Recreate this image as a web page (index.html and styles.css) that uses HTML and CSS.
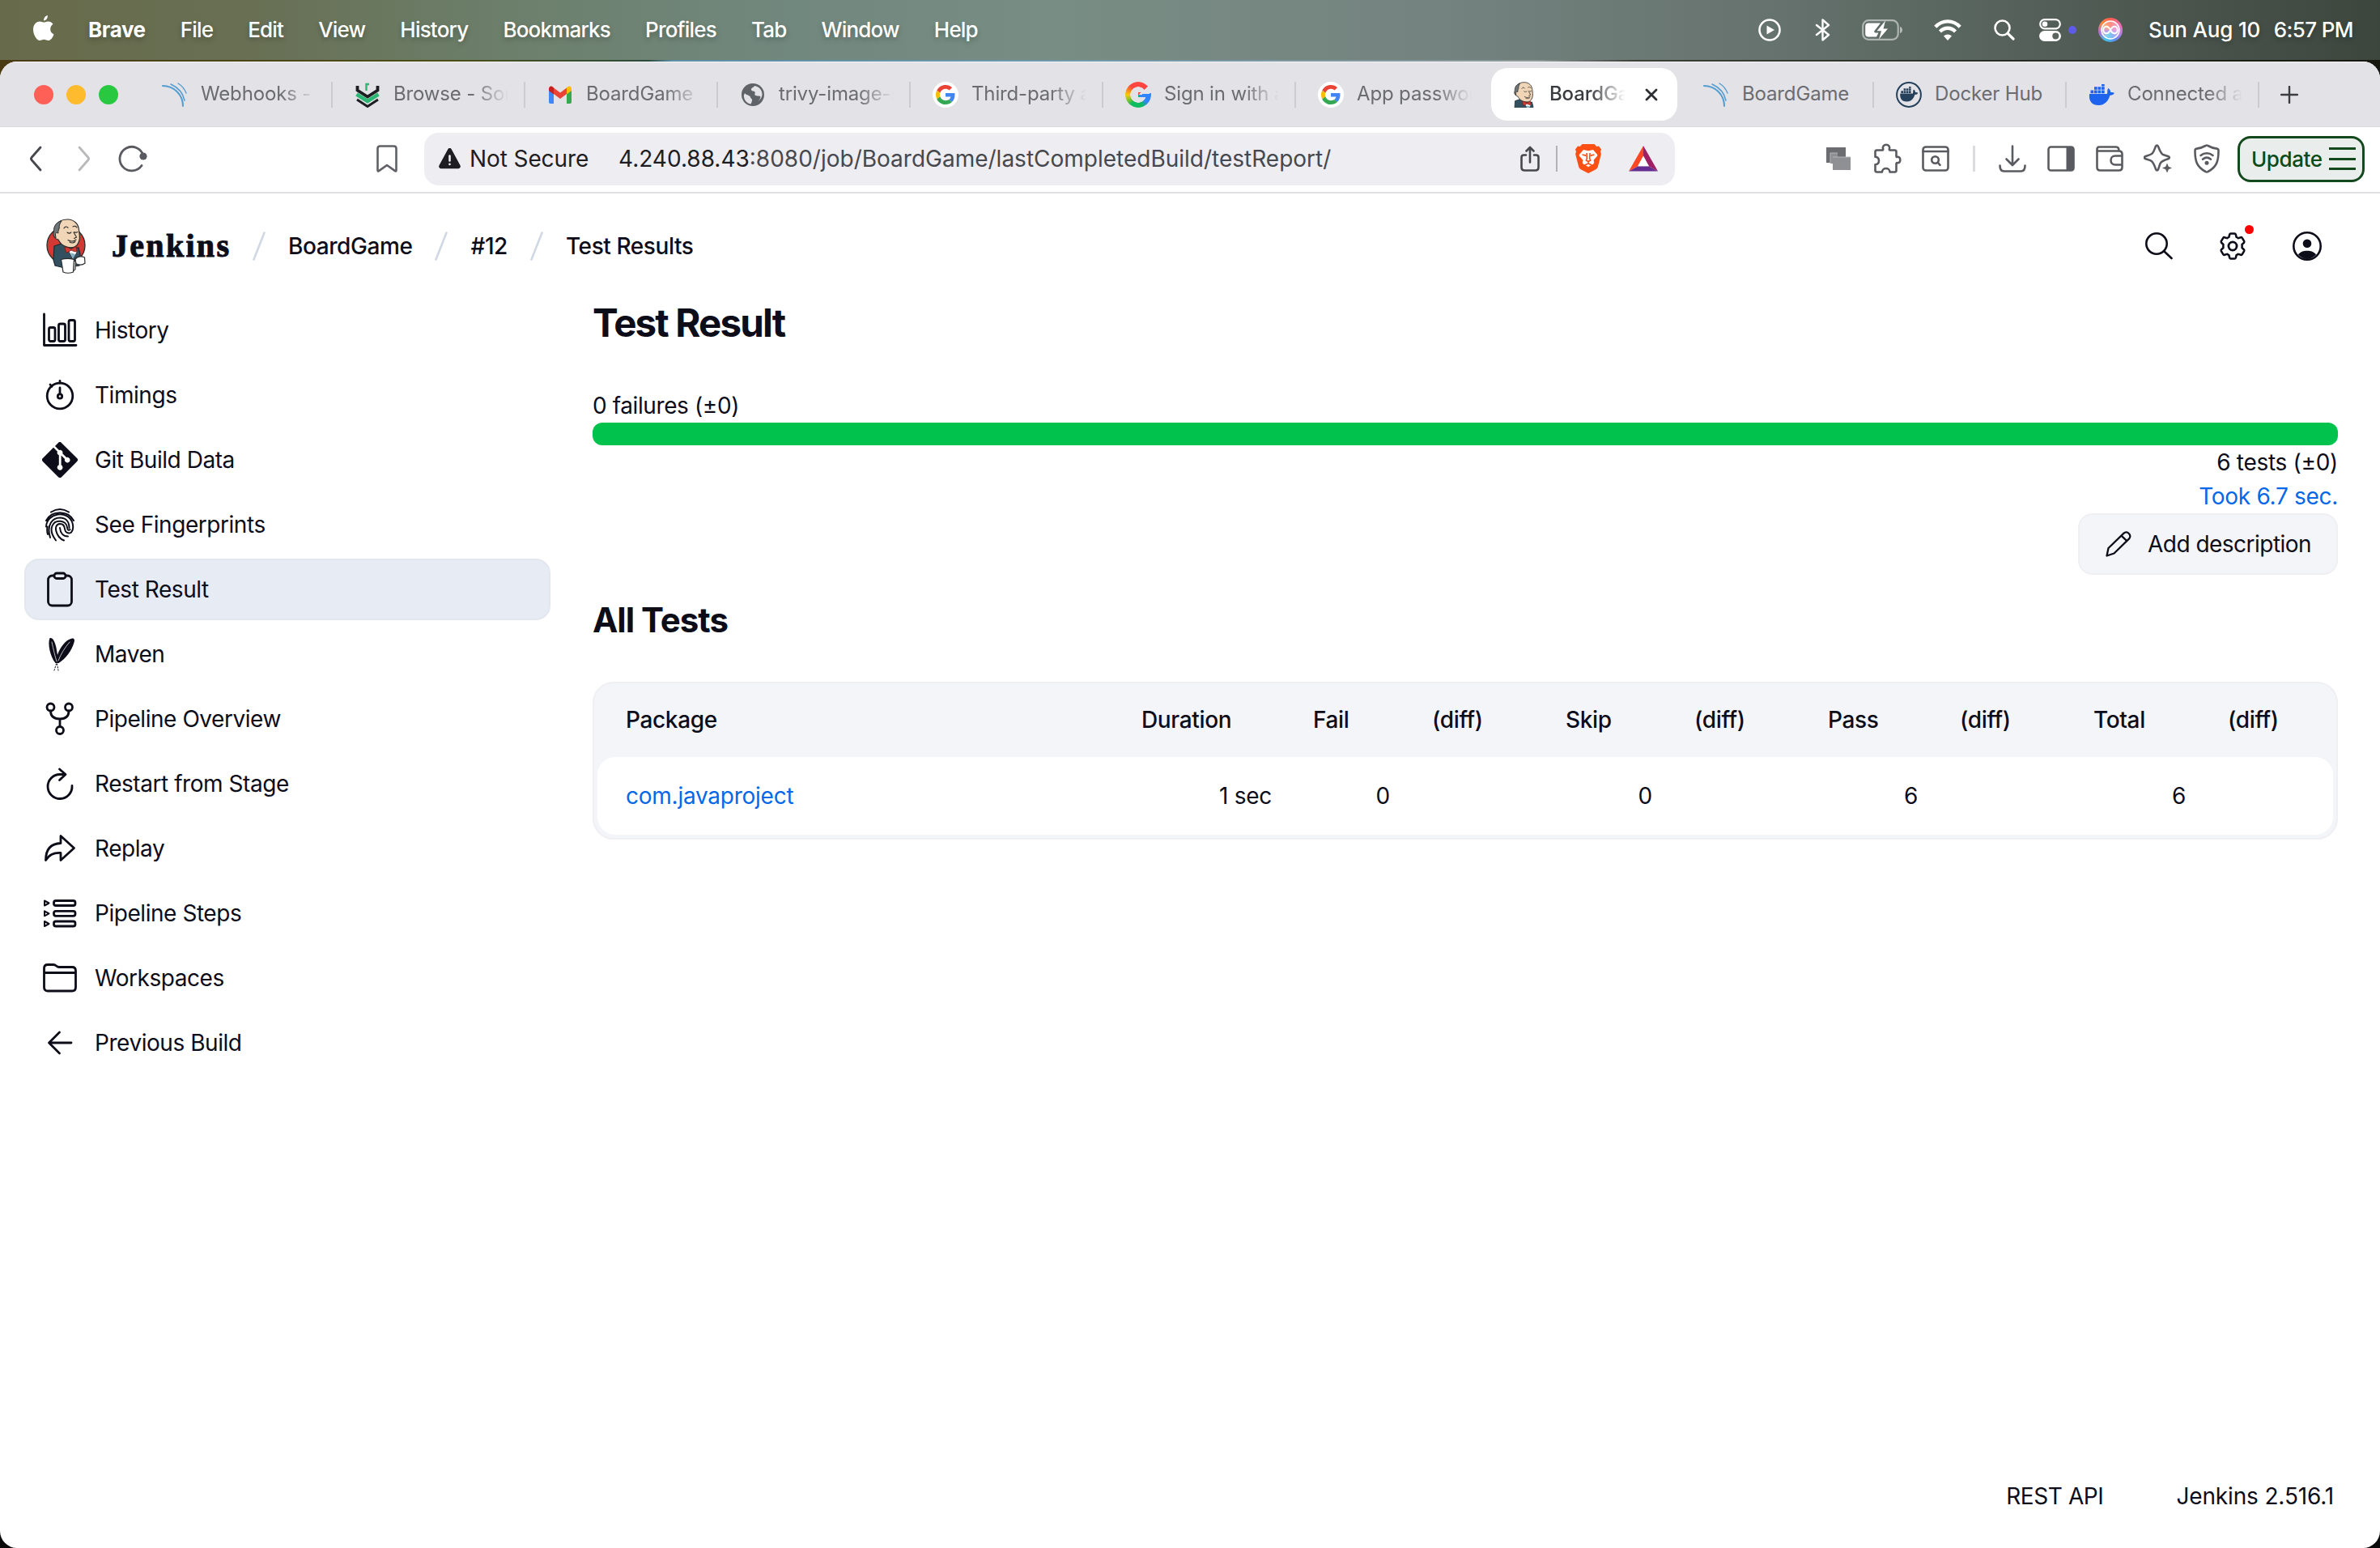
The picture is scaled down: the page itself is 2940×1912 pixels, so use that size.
FILE: index.html
```html
<!DOCTYPE html>
<html lang="en">
<head>
<meta charset="utf-8">
<title>Test Results - Jenkins</title>
<link rel="stylesheet" href="styles.css">
</head>
<body>
<svg class="defs" width="0" height="0" aria-hidden="true">
  <defs>
    <symbol id="google" viewBox="0 0 48 48">
      <path fill="#EA4335" d="M24 9.5c3.54 0 6.71 1.22 9.21 3.6l6.85-6.85C35.9 2.38 30.47 0 24 0 14.62 0 6.51 5.38 2.56 13.22l7.98 6.19C12.43 13.72 17.74 9.5 24 9.5z"/>
      <path fill="#4285F4" d="M46.98 24.55c0-1.57-.15-3.09-.38-4.55H24v9.02h12.94c-.58 2.96-2.26 5.48-4.78 7.18l7.73 6c4.51-4.18 7.09-10.36 7.09-17.65z"/>
      <path fill="#FBBC05" d="M10.53 28.59c-.48-1.45-.76-2.99-.76-4.59s.27-3.14.76-4.59l-7.98-6.19C.92 16.46 0 20.12 0 24c0 3.88.92 7.54 2.56 10.78l7.97-6.19z"/>
      <path fill="#34A853" d="M24 48c6.48 0 11.93-2.13 15.89-5.81l-7.73-6c-2.15 1.45-4.92 2.3-8.16 2.3-6.26 0-11.57-4.22-13.47-9.91l-7.98 6.19C6.51 42.62 14.62 48 24 48z"/>
    </symbol>
    <symbol id="google-disc" viewBox="0 0 32 32">
      <circle cx="16" cy="16" r="16" fill="#fff"/>
      <use href="#google" x="4" y="4" width="24" height="24"/>
    </symbol>
    <symbol id="sonar" viewBox="0 0 32 32">
      <g fill="none" stroke="#549dd0" stroke-linecap="round">
        <path stroke-width="2" d="M1 5c14 0 25 11 25 25"/>
        <path stroke-width="1.6" d="M11 3c9 4 15 11 17 20"/>
        <path stroke-width="1.4" d="M20 2c5 3 8 7 10 12"/>
      </g>
    </symbol>
    <symbol id="whale" viewBox="0 0 32 28">
      <path d="M1 12h22c.6-2.600-.2-5 1.300-7 2 1.300 2.800 3 2.900 5 1.800-.3 3.500 0 4.600.8-.8 2.200-2.700 3-5.300 3C24 21.500 19.500 26 12.500 26 5 26 0 22 1 12z"/>
      <path d="M2.500 7.500h3.700v3.700H2.500zM7 7.500h3.700v3.700H7zM11.500 7.500h3.700v3.700h-3.700zM16 7.500h3.700v3.700H16zM7 3.200h3.700v3.600H7zM11.500 3.200h3.700v3.600h-3.700zM16 3.200h3.700v3.600H16zM16-1h3.700v3.500H16z"/>
    </symbol>
    <symbol id="butler" viewBox="0 0 50 68">
      <path fill="#335061" stroke="#1d2a33" stroke-width="1.200" d="M10 34l9-3 14 6 7-1 2 8-1 14-18 3-12-3-2-7z"/>
      <path fill="#f0d6b7" stroke="#2b2b2b" stroke-width="1.200" d="M12 10C14 3 21 .8 27 1c8 .3 13 6 13.500 13l.8 7c.6 5-1.300 11-5.300 13.500-4 2-9 1.500-13-.5-4-1.500-6.500-5-8-8-3-.5-5.500-3-5.500-6s1-5 3-5z"/>
      <path fill="#6d7576" stroke="#2b2b2b" stroke-width="1" d="M12 24c-3-1-4-5-2.500-8C9 9 13 4 19 3c-2 3-3 5-2.800 9-1.200 3-1.600 4-1.200 6-2-1-4-.5-3.500 2z"/>
      <path fill="none" stroke="#2b2b2b" stroke-width="1.100" stroke-linecap="round" d="M22 12c1.500-2.500 4-2.500 5-.5M33 10c2-1.500 4-.5 5 1M26 17c1.500 1.300 3.500 1.300 4.800 0M35 16.500c1.200 1 2.800 1 3.800-.2M34 17l3.500 6-3 1.500M27 26.500c4 2.500 7 2 10-.5M29 29c2.500 1.500 5 1 7-.5"/>
      <path fill="#fff" stroke="#2b2b2b" stroke-width=".8" d="M27 39l6 11 6-10-4-3z"/>
      <path fill="#81b0c4" d="M30 42l3 8 3-6z"/>
      <path fill="#d33833" stroke="#6f1a16" stroke-width=".8" d="M23 35c3 0 5 1.500 8 2.500 2-1 4-2.500 6.500-2.500l.5 6c-2.500 0-5-1-7-2-2 1-4 3-6.500 3z"/>
      <path fill="#fff" stroke="#2b2b2b" stroke-width="1.200" d="M36 50c3-3.500 8-4 11.500-2l.5 7c-3 2.500-7 2.500-11 .8z"/>
      <path fill="#dcd9d8" stroke="#2b2b2b" stroke-width="1" d="M34 52l2.500 1-.5 10-3 2z"/>
      <path fill="#fff" stroke="#2b2b2b" stroke-width="1.200" d="M18.500 50.500c5-1.500 11-1.500 16 0l-1 15.500c-4 1.500-9 1.500-12.500 0z"/>
    </symbol>
  </defs>
</svg>

<header class="menubar">
  <svg class="apple" viewBox="0 0 26 31"><path fill="#fff" d="M18.300 7.400c-2.200 0-3.200 1.200-4.900 1.200-1.700 0-3-1.200-5.200-1.200C4.800 7.400 0 10.300 0 17.300 0 23.800 4.200 31 8 31c2.100 0 2.900-1.300 5.400-1.300 2.400 0 3.100 1.300 5.200 1.300 3.300 0 5.900-4.700 6.900-7.600-2.600-1.100-4.300-3.300-4.300-6.400 0-2.800 1.500-4.900 3.400-6.200-1.500-2.200-3.700-3.400-6.300-3.400zM17.800 0c-2.300.3-5 3-4.700 6.500 2.800 0 5.100-3.100 4.700-6.500z"/></svg>
  <nav class="menus">
    <b>Brave</b><span>File</span><span>Edit</span><span>View</span><span>History</span><span>Bookmarks</span><span>Profiles</span><span>Tab</span><span>Window</span><span>Help</span>
  </nav>
  <div class="status">
    <svg class="st-play" viewBox="0 0 28 28"><circle cx="14" cy="14" r="12.500" fill="none" stroke="#fff" stroke-width="2.600"/><path fill="#fff" d="M10.500 8.500l9.500 5.500-9.500 5.500z"/></svg>
    <svg class="st-bt" viewBox="0 0 19 28"><path fill="none" stroke="#fff" stroke-width="2.400" stroke-linejoin="round" stroke-linecap="round" d="M2 8l15 12-7.500 6.500v-25L17 8 2 20"/></svg>
    <svg class="st-batt" viewBox="0 0 51 26"><rect x="1.200" y="1.200" width="43.500" height="23.600" rx="7" fill="none" stroke="#fff" stroke-opacity=".5" stroke-width="2.200"/><path fill="#fff" fill-opacity=".55" d="M47 9c4 1 4 7 0 8z"/><path fill="#fff" d="M8 4.500h15L15.500 14c-.8 1.500 0 2.500 1.500 2.500h3.500L18 21.500H8c-2.500 0-3.800-1.300-3.800-3.800V8.300C4.200 5.800 5.500 4.500 8 4.500z"/><path fill="#fff" d="M29 1.500L18.500 14.200H24l-3 10.300L32 11.500h-5.500z"/></svg>
    <svg class="st-wifi" viewBox="0 0 34 26"><g fill="none" stroke="#fff" stroke-width="4.300"><path d="M1.800 9.300C10.200 0 23.800 0 32.200 9.300"/><path d="M7.500 15c5.200-5.700 13.800-5.700 19 0"/></g><path fill="#fff" d="M17 26l-5-5.500c2.800-2.800 7.200-2.800 10 0z"/></svg>
    <svg class="st-search" viewBox="0 0 26 26"><circle cx="10.500" cy="10.500" r="9" fill="none" stroke="#fff" stroke-width="2.600"/><path stroke="#fff" stroke-width="3.200" stroke-linecap="round" d="M17.300 17.300l6.700 6.700"/></svg>
    <svg class="st-cc" viewBox="0 0 27 28"><rect x="1.200" y="1.200" width="24.600" height="11.200" rx="5.600" fill="none" stroke="#fff" stroke-width="2.200"/><circle cx="7" cy="6.800" r="3.300" fill="#fff"/><rect y="15" width="27" height="13" rx="6.500" fill="#fff"/><circle cx="20.300" cy="21.500" r="4" fill="#5b645f"/></svg>
    <i class="mic-dot"></i>
    <i class="siri"><svg viewBox="0 0 30 30"><circle cx="15" cy="15" r="11" fill="#fff" fill-opacity=".3" stroke="#fff" stroke-width="1.500"/><path fill="none" stroke="#fff" stroke-width="1.900" d="M15 15c-2-4-4-5-6.500-4-3 1.500-3 6.500 0 8 2.500 1 4.500 0 6.500-4s4-5 6.500-4c3 1.500 3 6.500 0 8-2.500 1-4.500 0-6.500-4z"/></svg></i>
    <span class="clock"><span>Sun Aug 10</span><span>6:57 PM</span></span>
  </div>
</header>
<div class="wallpaper-edge"></div>

<div class="window">
  <div class="tabstrip">
    <div class="lights"><i class="red"></i><i class="amber"></i><i class="green"></i></div>
    <div class="tab"><svg class="fav"><use href="#sonar"/></svg><span>Webhooks - S</span></div>
    <div class="tab"><svg class="fav" viewBox="0 0 32 32"><g fill="none" stroke-width="3.800"><path stroke="#1c1e21" d="M3.500 5v5.500L16 18.500l12.500-8V5"/><path stroke="#2bb673" stroke-width="4.600" d="M2.500 15.500L16 24l13.500-8.500"/><path stroke="#1c1e21" stroke-width="3" d="M3 22l13 8.500L29 22"/><path stroke="#2bb673" stroke-width="2.400" d="M14.500 11V3H18"/></g></svg><span>Browse - Sonatype</span></div>
    <div class="tab"><svg class="fav" viewBox="0 0 32 32"><path fill="#4285f4" d="M2 9l6 5v13H4c-1.200 0-2-.8-2-2z"/><path fill="#34a853" d="M24 14l6-5v16c0 1.200-.8 2-2 2h-4z"/><path fill="#ea4335" d="M8 7.500l8 6 8-6V15l-8 6-8-6z"/><path fill="#fbbc04" d="M24 7.500C27 4 30 5.500 30 9v2l-6 4.500z"/><path fill="#c5221f" d="M8 7.500C5 4 2 5.500 2 9v2l6 4.500z"/></svg><span>BoardGame -</span></div>
    <div class="tab"><svg class="fav" viewBox="0 0 32 32"><circle cx="16" cy="16" r="14" fill="#5f6368"/><path fill="#e3e2e7" d="M6 14c2 3 6 2 7 5 .5 2 2.500 2 2 4.500-.5 1.500-1 3-1.500 4C8 26.500 4.800 22 4.800 17zM18 5c-1 2.500-4 2-4 4.500s3 1.500 4.500 3c1 1.500-1.500 3.500 1 4.500s5-.5 6 1.500c-.5 2.500-1.500 4-3 5.500 3-2 5-5 5-8.500C27.500 10 23.500 6 18 5z"/></svg><span>trivy-image-scan</span></div>
    <div class="tab"><svg class="fav"><use href="#google-disc"/></svg><span>Third-party app</span></div>
    <div class="tab"><i class="fav g-conic"></i><span>Sign in with a</span></div>
    <div class="tab last"><svg class="fav"><use href="#google-disc"/></svg><span>App passwords</span></div>
    <div class="tab active"><svg class="fav" viewBox="2 0 46 46"><use href="#butler" width="50" height="68"/></svg><span>BoardGame</span><svg class="close" viewBox="0 0 16 16"><path stroke="#2d2e33" stroke-width="2.800" stroke-linecap="round" d="M2 2l12 12M14 2L2 14"/></svg></div>
    <div class="tab whole"><svg class="fav"><use href="#sonar"/></svg><span>BoardGame</span></div>
    <div class="tab whole"><svg class="fav" viewBox="0 0 32 32"><circle cx="16" cy="16" r="14.900" fill="none" stroke="#24405a" stroke-width="2"/><use href="#whale" x="4.500" y="6" width="23" height="20" fill="#24405a"/></svg><span>Docker Hub</span></div>
    <div class="tab"><svg class="fav" viewBox="0 -3 32 32"><use href="#whale" width="32" height="28" fill="#1d63ed" overflow="visible"/></svg><span>Connected acc</span></div>
    <svg class="newtab" viewBox="0 0 22 22"><path stroke="#3c3d42" stroke-width="2.400" stroke-linecap="round" d="M11 1v20M1 11h20"/></svg>
  </div>

  <div class="toolbar">
    <div class="slot"><svg width="16" height="32" viewBox="0 0 16 32"><path fill="none" stroke="#47484d" stroke-width="2.800" stroke-linecap="round" stroke-linejoin="round" d="M14 2L3 14.500c-.8 1-.8 2 0 3L14 30"/></svg></div>
    <div class="slot"><svg width="16" height="32" viewBox="0 0 16 32"><path fill="none" stroke="#b9b9bc" stroke-width="2.800" stroke-linecap="round" stroke-linejoin="round" d="M2 2l11 12.500c.8 1 .8 2 0 3L2 30"/></svg></div>
    <div class="slot"><svg width="36" height="34" viewBox="0 0 36 34"><path fill="none" stroke="#5a5b60" stroke-width="2.800" stroke-linecap="round" d="M29 25.500A14.800 14.800 0 1 1 31 13"/><circle cx="31" cy="14" r="4.600" fill="#5a5b60"/></svg></div>
    <div class="slot bookmark"><svg width="26" height="34" viewBox="0 0 26 34"><path fill="none" stroke="#606166" stroke-width="2.600" stroke-linejoin="round" d="M1.500 4.500c0-2 1-3 3-3h17c2 0 3 1 3 3v27c0 1-.8 1.300-1.500.6L13 25l-10 7.100c-.7.700-1.500.4-1.500-.6z"/></svg></div>
    <div class="urlbar">
      <svg width="27" height="26" viewBox="0 0 27 26"><path fill="#1d1d22" d="M11.200 1.500c1-1.900 3.600-1.900 4.600 0l10.700 19.700c1 1.900-.2 4-2.300 4H2.800c-2.100 0-3.300-2.100-2.300-4z"/><path stroke="#ededf2" stroke-width="2.600" stroke-linecap="round" d="M13.500 9.500v6M13.500 19.800v.2"/></svg>
      <span class="insecure">Not Secure</span>
      <span class="url"><em>4.240.88.43</em>:8080/job/BoardGame/lastCompletedBuild/testReport/</span>
      <svg class="share" width="24" height="32" viewBox="0 0 24 32"><g fill="none" stroke="#47484d" stroke-width="2.600" stroke-linecap="round" stroke-linejoin="round"><path d="M7 11.500H4.500c-2 0-3 1-3 3v12c0 2.500 1.500 4 4 4h13c2.500 0 4-1.500 4-4v-12c0-2-1-3-3-3H17M12 20.500V2M7.500 6.500L12 1.800l4.500 4.700"/></g></svg>
      <i class="vsep"></i>
      <svg class="lion" width="32" height="36" viewBox="0 0 32 36"><path fill="#fb4f14" d="M8.500 0h15l2.800 3 2.700-.4L32 6.500l-1 3 .9 2.800-4 15.500c-.5 1.800-1.400 2.600-2.600 3.500L16 36l-9.300-4.700c-1.200-.9-2.100-1.700-2.600-3.500L.1 12.300 1 9.500l-1-3 3-3.900 2.700.4z"/><path fill="#fff" d="M10 7l6 1.200L22 7l5 5.700c.5.800.4 1.500-.2 2.200l-3.800 4.300c-.5.600-.6 1.100-.2 1.700.8 1.300.4 2.600-.6 3.500l-1.400 1.100-3.500 1.800L16 28.500l-1.300-1.200-3.500-1.800-1.400-1.100c-1-.9-1.400-2.200-.6-3.500.4-.6.3-1.100-.2-1.700l-3.800-4.300c-.6-.7-.7-1.400-.2-2.200z"/><path fill="none" stroke="#fb4f14" stroke-width="1.600" stroke-linejoin="round" d="M8.500 13l4.600 1.100M23.500 13l-4.600 1.100M14 11l.3 7-1 2 2.700 1.500 2.700-1.500-1-2 .3-7M16 21.500v2.500l-4.600 2M16 24l4.600 2"/></svg>
      <svg class="bat" width="36" height="32" viewBox="0 0 36 32"><path fill="#ff4724" d="M18 0L0 31.500l11.500-6.200L18 13z"/><path fill="#9e1f63" d="M18 0l18 31.500-11.500-6.200L18 13z"/><path fill="#662d91" d="M0 31.500h36l-11.500-6.200h-13z"/><path fill="#fff" d="M18 12.500l7 12.800H11z"/></svg>
    </div>
    <div class="ext">
      <div class="slot"><svg width="30" height="28" viewBox="0 0 30 28"><rect width="24" height="19" fill="#6c6d71"/><path fill="#8f9094" d="M5 7h9v5h16v16H8v-8H5z"/><path fill="none" stroke="#b5b5b8" stroke-width="1" d="M5 20V7h9M8 12h22"/></svg></div>
      <div class="slot"><svg width="36" height="38" viewBox="0 0 36 38"><path fill="none" stroke="#5a5b60" stroke-width="2.600" stroke-linejoin="round" d="M5.500 8.500h6.800c.8 0 1-.6.800-1.300C12.300 4 14 1.800 17 1.800s4.700 2.200 3.900 5.400c-.2.700 0 1.300.8 1.300h5.800c1.200 0 2 .8 2 2V16c0 .8.600 1 1.300.8 2.200-.2 3.500 1.400 3.500 3.700s-1.300 4-3.500 3.700c-.7-.2-1.300.1-1.300.8v8.500c0 1.200-.8 2-2 2h-6c0-6-9.500-6-9.500 0H5.500c-1.200 0-2-.8-2-2v-7.300c6-.5 6-9 0-9.500v-6.200c0-1.200.8-2 2-2z"/></svg></div>
      <div class="slot"><svg width="34" height="32" viewBox="0 0 34 32"><g fill="none" stroke="#5a5b60" stroke-width="2.600" stroke-linecap="round"><rect x="1.500" y="1.500" width="31" height="29" rx="3.500"/><path d="M1.500 7h31"/><circle cx="16.500" cy="17.500" r="4.300"/><path d="M20 21l2.500 2.800"/></g></svg></div>
      <i class="vsep light"></i>
      <div class="slot"><svg width="34" height="34" viewBox="0 0 34 34"><path fill="none" stroke="#5a5b60" stroke-width="2.600" stroke-linecap="round" stroke-linejoin="round" d="M17 1.500v23M9.500 17.500L17 25l7.500-7.500M1.500 25.500c0 4.500 1.500 7 5 7h21c3.500 0 5-2.500 5-7"/></svg></div>
      <div class="slot"><svg width="34" height="32" viewBox="0 0 34 32"><rect x="1.500" y="1.500" width="31" height="29" rx="3" fill="none" stroke="#5a5b60" stroke-width="2.600"/><path fill="#5a5b60" d="M23.500 1h7c1.500 0 2.500 1 2.500 2.500v25c0 1.500-1 2.500-2.500 2.500h-7z"/></svg></div>
      <div class="slot"><svg width="34" height="32" viewBox="0 0 34 32"><g fill="none" stroke="#5a5b60" stroke-width="2.600" stroke-linejoin="round"><path d="M1.500 4.500v22c0 2.500 1.200 4 4 4h23c2.500 0 4-1.500 4-4v-16c0-2.500-1.500-4-4-4h-25c-1.500 0-2-1-2-2.300s.8-2.700 2.500-2.700H25c2.500 0 3.500 1.500 3.500 5"/><path d="M32.500 12.500h-8.500c-3.500 0-5.500 2.500-5.500 5.500s2 5.500 5.500 5.500h8.500"/></g></svg></div>
      <div class="slot"><svg width="36" height="36" viewBox="0 0 36 36"><path fill="none" stroke="#5a5b60" stroke-width="2.600" stroke-linejoin="round" d="M15 2.500c.8-1.300 2.200-1.300 2.800 0 2 5 3.500 9.500 6.300 10.600l6.600 2.200c1.500.6 1.500 2.200 0 2.800-4 1.300-8 2.300-10 5.500-1 2-1.600 5-2.800 7.800-.6 1.300-2 1.300-2.700 0-2-5.500-3-9-6-10.800-2-1.100-5-1.700-7.200-2.600-1.300-.5-1.300-2.200 0-2.700 3-1.200 6-1.700 8.400-3.500C12.800 9.600 13.500 6 15 2.500z"/><path fill="#5a5b60" d="M29 23.500l1.800 4.200 4.200 1.800-4.200 1.800L29 35.500l-1.800-4.200-4.200-1.800 4.200-1.800z"/></svg></div>
      <div class="slot"><svg width="32" height="36" viewBox="0 0 32 36"><g fill="none" stroke="#5a5b60" stroke-width="2.600" stroke-linejoin="round"><path d="M14.500 2c1-.7 2-.7 3 0 3.500 2 7 3.200 11 3.600 1.400.2 2 1 2 2.400 0 13-2 20-13 26-1 .6-2 .6-3 0C3.500 28 1.500 21 1.500 8c0-1.400.6-2.200 2-2.400 4-.4 7.500-1.600 11-3.600z"/><path stroke-linecap="round" d="M8.500 14c4.500-3.700 10.500-3.700 15 0M11 18.700c3-2.400 7-2.400 10 0"/></g><circle cx="16" cy="23.200" r="2.500" fill="#5a5b60"/></svg></div>
      <div class="update"><span>Update</span><i class="burger"></i></div>
    </div>
  </div>

  <main class="page">
    <div class="crumbs">
      <svg class="logo" viewBox="0 0 50 68"><ellipse cx="24.500" cy="33" rx="23.500" ry="23" fill="#d33833" stroke="#2b2b2b" stroke-width="1.300"/><use href="#butler" width="50" height="68"/></svg>
      <span class="brand">Jenkins</span>
      <svg class="slash s1" viewBox="0 0 16 36"><path d="M14.500 1.500l-13 33"/></svg>
      <span>BoardGame</span>
      <svg class="slash" viewBox="0 0 16 36"><path d="M14.500 1.500l-13 33"/></svg>
      <span>#12</span>
      <svg class="slash" viewBox="0 0 16 36"><path d="M14.500 1.500l-13 33"/></svg>
      <span>Test Results</span>
      <div class="actions">
        <svg width="34" height="34" viewBox="0 0 34 34"><g fill="none" stroke="#0d0d1a" stroke-width="2.600" stroke-linecap="round"><circle cx="14" cy="14" r="12.700"/><path d="M23.200 23.200L32.500 32"/></g></svg>
        <div class="gear"><svg width="36" height="38" viewBox="0 0 512 512"><path fill="none" stroke="#0d0d1a" stroke-width="36" stroke-linecap="round" stroke-linejoin="round" d="M222 36h68c10 0 17 6 20 16l12 46c12 5 22 10 32 18l45-14c10-3 19 1 24 10l34 58c5 9 3 19-4 26l-33 32c2 18 2 38 0 56l33 32c7 7 9 17 4 26l-34 58c-5 9-14 13-24 10l-45-14c-10 8-20 13-32 18l-12 46c-3 10-10 16-20 16h-68c-10 0-17-6-20-16l-12-46c-12-5-22-10-32-18l-45 14c-10 3-19-1-24-10l-34-58c-5-9-3-19 4-26l33-32c-2-18-2-38 0-56l-33-32c-7-7-9-17-4-26l34-58c5-9 14-13 24-10l45 14c10-8 20-13 32-18l12-46c3-10 10-16 20-16z"/><circle cx="256" cy="256" r="72" fill="none" stroke="#0d0d1a" stroke-width="40"/></svg><i></i></div>
        <svg width="36" height="36" viewBox="0 0 36 36"><circle cx="18" cy="18" r="16.700" fill="none" stroke="#0d0d1a" stroke-width="2.600"/><circle cx="18" cy="14.700" r="5.300" fill="#0d0d1a"/><path fill="#0d0d1a" d="M7 28.500c2.500-3.600 6.500-4.700 11-4.700s8.500 1.100 11 4.700c-3 3.500-7 5.500-11 5.500s-8-2-11-5.500z"/></svg>
      </div>
    </div>

    <div class="columns">
      <aside class="side">
        <a><svg viewBox="0 0 44 44"><path d="M2.500 2v38.500H42"/><rect x="8.500" y="18.500" width="7.500" height="17" rx="2"/><rect x="20.500" y="14" width="8" height="21.500" rx="2"/><rect x="33" y="9.500" width="7.500" height="26" rx="2"/></svg>History</a>
        <a><svg viewBox="0 0 44 44"><circle cx="22" cy="23" r="15.800"/><path d="M22 13v7.500M22 4.500v2.500M10 9l2 2.500"/><circle cx="22" cy="23.500" r="2.700"/></svg>Timings</a>
        <a><svg viewBox="0 0 92 92"><path class="solid" d="M90.200 41.900L50.100 1.900a5.900 5.900 0 0 0-8.400 0l-8.300 8.300 10.500 10.500a7 7 0 0 1 8.900 9l10.200 10.100a7 7 0 1 1-4.200 4l-9.500-9.500v25a7 7 0 1 1-5.800-.2V33.900a7 7 0 0 1-3.800-9.200L29.300 14.300 1.800 41.800a5.900 5.900 0 0 0 0 8.400l40.100 40a5.900 5.900 0 0 0 8.400 0l39.900-39.900a5.900 5.900 0 0 0 0-8.400z"/></svg>Git Build Data</a>
        <a><svg class="thin" viewBox="0 0 44 44"><path d="M11 6.500c7-4.500 15-4.500 22 0M5 17C12 4 32 4 39 17M5 24.500C5.500 7.500 32 3 37.500 20c1 4 1 9-1.500 11.500-3.500 2.500-7.500 0-8-4-.3-5-3-6.500-6-6.500-9 .5-5 16.500 5 20.500M7 34c-1-3-1-6-.5-9.500M10 38C5 22 13 13.500 22 13.500c7.500 0 11.500 5 11.500 12.500M17 41.500c-5-6.500-6.500-13-4.500-18 3.500-8.500 17.500-7.500 18.500 2 .3 3.500 2 4 3.500 2.500M22 26c.5 6 4 10.500 10 10.500"/></svg>See Fingerprints</a>
        <a class="current"><svg viewBox="0 0 44 44"><rect x="7.500" y="5" width="29" height="37" rx="5"/><rect x="15" y="2" width="14" height="6.500" rx="3" fill="#e7ebf4"/></svg>Test Result</a>
        <a><svg viewBox="0 0 44 44"><path class="solid" d="M9.500 2c4-1 6.500 5 8 12l1.500 9C22 14 29 4 37 2.500c3-.5 3.500 2 2.500 5C37 17 29 28 20.500 33h-4C10 25 6.500 9 9.500 2z"/><path stroke="#fff" stroke-width=".7" d="M12 7c2 9 4 18 6 24M34 7c-6 7-11 15-14 23"/><path stroke-width="1" stroke-dasharray="1.500 2" d="M17.500 34l-2.500 8M18.500 34l1.500 8"/></svg>Maven</a>
        <a><svg viewBox="0 0 44 44"><circle cx="10.500" cy="7.500" r="4.500"/><circle cx="33" cy="7.500" r="4.500"/><circle cx="22" cy="36" r="4.500"/><path d="M10.500 12c0 6 3 10 11.500 10S33 18 33 12M22 22v9.500"/></svg>Pipeline Overview</a>
        <a><svg viewBox="0 0 44 44"><path d="M37 24.500a15 15 0 1 1-15-14h6.500M21.500 4l7.500 6.500-7.500 7"/></svg>Restart from Stage</a>
        <a><svg viewBox="0 0 44 44"><path d="M23 6.500v9C10 16 4.500 24 4.500 36.500 9 29.500 14 27 23 27.500V36.500l16.500-15z"/></svg>Replay</a>
        <a><svg viewBox="0 0 44 44"><rect x="14.500" y="6.500" width="26.500" height="6" rx="2.500"/><rect x="14.500" y="19.300" width="26.500" height="6" rx="2.500"/><rect x="14.500" y="32" width="26.500" height="6" rx="2.500"/><path stroke-width="2" d="M3 6.500v6l5.500-3zM3 19.300v6l5.500-3zM3 32v6l5.500-3z"/></svg>Pipeline Steps</a>
        <a><svg viewBox="0 0 44 44"><path d="M2.500 14.500V10c0-3 1.500-4.500 4.500-4.500h7c3.500 0 3.500 3 7 3h16c3 0 4.500 1.500 4.500 4.500v20.500c0 3-1.500 4.500-4.500 4.500H7c-3 0-4.500-1.500-4.500-4.500zM2.500 15.500h39"/></svg>Workspaces</a>
        <a><svg viewBox="0 0 44 44"><path d="M21.500 9L8.500 22l13 13M9 22h27"/></svg>Previous Build</a>
      </aside>

      <section class="main">
        <h1>Test Result</h1>
        <div class="failures">0 failures (±0)</div>
        <div class="bar"></div>
        <div class="summary">
          <div>6 tests (±0)</div>
          <div class="link">Took 6.7 sec.</div>
          <div class="button"><svg width="32" height="32" viewBox="0 0 32 32"><path fill="none" stroke="#0d0d1a" stroke-width="2.300" stroke-linejoin="round" d="M1.500 30.500l2-9.500L22.500 2.700c2-2 4.500-1.500 6.300.3s2.200 4.500.3 6.400L10.500 27.500zM19.500 5.700l6.800 6.500"/></svg>Add description</div>
        </div>
        <h2>All Tests</h2>
        <div class="table">
          <div class="row head"><span>Package</span><span>Duration</span><span>Fail</span><span>(diff)</span><span>Skip</span><span>(diff)</span><span>Pass</span><span>(diff)</span><span>Total</span><span>(diff)</span></div>
          <div class="row body"><span class="link">com.javaproject</span><span class="num time">1 sec</span><span class="num">0</span><span></span><span class="num">0</span><span></span><span class="num">6</span><span></span><span class="num">6</span><span></span></div>
        </div>
      </section>
    </div>

    <footer><span>REST API</span><span>Jenkins 2.516.1</span></footer>
  </main>
</div>
</body>
</html>
```
FILE: styles.css
```css
* { box-sizing: border-box; }
body {
  margin: 0;
  width: 2940px;
  height: 1912px;
  overflow: hidden;
  background: #0b0a0a;
  font-family: Inter, "Liberation Sans", sans-serif;
  color: #0d0d1a;
  display: flex;
  flex-direction: column;
}
.defs { position: absolute; }
svg { display: block; flex: none; }
i { display: block; flex: none; font-style: normal; }

/* macOS menu bar */
.menubar {
  height: 74px;
  flex: none;
  display: flex;
  align-items: center;
  padding: 0 33px 2px 41px;
  color: #fff;
  font-size: 26px;
  font-weight: 500;
  letter-spacing: -0.4px;
  background: linear-gradient(90deg, #686b4b 0, #686f53 300px, #6c7f6b 620px, #71887e 980px, #788d84 1300px, #74827f 1800px, #65726d 2200px, #4f5a53 2600px, #3c463d 2940px);
  text-shadow: 0 3px 6px rgba(0, 0, 0, .25);
}
.apple { width: 26px; height: 31px; margin-top: -3px; }
.menus { display: flex; gap: 43px; margin-left: 42px; letter-spacing: -0.8px; }
.menus b { font-weight: 700; letter-spacing: -0.4px; }
.status { margin-left: auto; display: flex; align-items: center; padding-top: 1px; }
.st-play { width: 28px; height: 28px; }
.st-bt { width: 19px; height: 28px; margin-left: 42px; }
.st-batt { width: 51px; height: 26px; margin-left: 39px; }
.st-wifi { width: 34px; height: 26px; margin-left: 38px; }
.st-search { width: 26px; height: 26px; margin-left: 40px; }
.st-cc { width: 27px; height: 28px; margin-left: 30px; }
.mic-dot { width: 10px; height: 10px; border-radius: 50%; background: #5e5ce6; margin-left: 9px; }
.siri { width: 30px; height: 30px; border-radius: 50%; margin-left: 27px; background: conic-gradient(#ff5a4e, #f06a9c, #c87be0, #5c8df0, #3fc6e8, #b26fd8, #ff8a3d, #ff5a4e); }
.clock { width: 253px; margin-left: 32px; display: flex; justify-content: space-between; white-space: nowrap; letter-spacing: -0.15px; }
.clock span + span { letter-spacing: -0.6px; }
.wallpaper-edge {
  height: 22px;
  margin-bottom: -20px;
  flex: none;
  background: linear-gradient(90deg, #4a3a14, #4b4f16 560px, #2c4a3c 800px, #5d8ea5 830px, #6f98ac 1300px, #8f9a98 1900px, #3b3f38 2020px, #16180f 2940px);
}

/* browser window */
.window {
  height: 1836px;
  flex: none;
  display: flex;
  flex-direction: column;
  background: #fff;
  border-radius: 21px;
  overflow: hidden;
  position: relative;
}
.tabstrip {
  height: 81px;
  flex: none;
  display: flex;
  align-items: center;
  background: #e3e2e7;
  border-top: 1px solid #f4f4f6;
  border-bottom: 1px solid #d8d8dc;
}
.lights { width: 173px; padding-left: 42px; display: flex; gap: 16px; }
.lights i { width: 24px; height: 24px; border-radius: 50%; }
.red { background: #fe5f57; }
.amber { background: #febb2e; }
.green { background: #28c840; }
.tab {
  width: 238px;
  height: 32px;
  flex: none;
  display: flex;
  align-items: center;
  padding: 0 19px 0 27px;
  gap: 16px;
  border-right: 2px solid #cbcbd0;
  font-size: 24px;
  letter-spacing: -0.15px;
  color: #6b6c71;
}
.tab span {
  flex: 1;
  overflow: hidden;
  white-space: nowrap;
  line-height: 30px;
  padding-bottom: 2px;
  -webkit-mask-image: linear-gradient(90deg, #000 calc(100% - 44px), transparent);
  mask-image: linear-gradient(90deg, #000 calc(100% - 44px), transparent);
}
.tab.whole span { overflow: visible; -webkit-mask-image: none; mask-image: none; }
.fav { width: 32px; height: 32px; }
.g-conic {
  border-radius: 50%;
  background: conic-gradient(from 0deg, #ff4641, #ff4641 50deg, transparent 50deg, transparent 84deg, #3186ff 84deg, #3186ff 130deg, #0ebc5f 160deg, #0ebc5f 215deg, #ffc900 270deg, #ff4641 320deg);
  -webkit-mask: radial-gradient(circle, transparent 9.500px, #000 10px), linear-gradient(#000, #000) 16px 13px / 16px 6px no-repeat;
  mask: radial-gradient(circle, transparent 9.500px, #000 10px), linear-gradient(#000, #000) 16px 13px / 16px 6px no-repeat;
}
.tab.last { border-color: transparent; }
.tab.active {
  width: 230px;
  height: 65px;
  margin: 0 5px 0 3px;
  padding: 0 24px 0 24px;
  border: 0;
  border-radius: 20px;
  background: #fff;
  color: #3a3b40;
  font-weight: 450;
}
.close { width: 16px; height: 16px; margin-left: 8px; }
.newtab { width: 22px; height: 22px; margin-left: 26px; }

.toolbar {
  height: 82px;
  flex: none;
  display: flex;
  align-items: center;
  padding: 0 19px 2px 14px;
  border-bottom: 2px solid #e0e0e4;
}
.slot { width: 60px; display: flex; justify-content: center; flex: none; }
.bookmark { margin-left: 254px; }
.urlbar {
  width: 1545px;
  height: 65px;
  margin-left: 16px;
  padding: 0 21px 0 18px;
  display: flex;
  align-items: center;
  border-radius: 18px;
  background: #ededf2;
  font-size: 28px;
  letter-spacing: 0;
  white-space: nowrap;
}
.insecure { width: 184px; margin-left: 11px; color: #1d1d22; letter-spacing: -0.1px; }
.url { color: #47484d; }
.url em { font-style: normal; color: #1d1d22; }
.share { margin-left: auto; }
.vsep { width: 2px; height: 32px; background: #b2b2b8; margin-left: 20px; }
.vsep.light { margin: 0 16px; background: #dcdce0; width: 3px; }
.lion { margin-left: 22px; }
.bat { margin-left: 34px; }
.ext { margin-left: auto; display: flex; align-items: center; }
.update {
  width: 157px;
  height: 57px;
  margin-left: 8px;
  border: 3px solid #14491d;
  border-radius: 16px;
  background: #e9edec;
  color: #0c4a17;
  display: flex;
  align-items: center;
  justify-content: space-between;
  padding: 0 8px 0 14px;
  font-size: 26px;
  font-weight: 500;
  letter-spacing: -0.4px;
}
.burger { width: 33px; height: 28px; border-top: 3px solid #14491d; border-bottom: 3px solid #14491d; display: flex; align-items: center; }
.burger::before { content: ""; flex: 1; height: 3px; background: #14491d; }

/* Jenkins page */
.page { flex: 1; display: flex; flex-direction: column; font-size: 28px; font-weight: 430; letter-spacing: -0.4px; line-height: 42px; }
.crumbs { height: 130px; display: flex; align-items: center; padding: 0 72px 0 57px; letter-spacing: -0.42px; font-weight: 450; }
.logo { width: 50px; height: 68px; }
.brand {
  width: 147px;
  margin-left: 31px;
  font-family: "Liberation Serif", serif;
  font-weight: 700;
  font-size: 40px;
  letter-spacing: 2.3px;
  -webkit-text-stroke: 1px #0d0d1a;
}
.slash { width: 16px; height: 36px; margin: 0 28px; }
.slash.s1 { margin-left: 27px; }
.slash path { fill: none; stroke: #cfd8e3; stroke-width: 2.6px; stroke-linecap: round; }
.actions { margin-left: auto; display: flex; align-items: center; gap: 56px; }
.gear { position: relative; }
.gear i { position: absolute; width: 11px; height: 11px; border-radius: 50%; background: #fe0000; right: -8px; top: -7px; }
.columns { flex: 1; display: flex; }
.side { width: 650px; margin-left: 30px; display: flex; flex-direction: column; gap: 4px; padding-top: 1px; letter-spacing: -0.45px; }
.side a { height: 76px; display: flex; align-items: center; padding-left: 22px; gap: 21px; border-radius: 18px; }
.side svg { width: 44px; height: 44px; fill: none; stroke: #0d0d1a; stroke-width: 2.8px; stroke-linecap: round; stroke-linejoin: round; }
.side svg.thin { stroke-width: 2px; }
.side .solid { fill: #0d0d1a; stroke: none; }
.side .current { background: #e7ebf4; border: 2px solid #e2e7ee; padding-left: 20px; }
.main { width: 2156px; margin-left: 52px; }
h1, h2 { margin: 0; font-weight: 700; color: #0d0d1a; }
h1 { font-size: 47.5px; line-height: 60px; letter-spacing: -1.85px; }
h2 { font-size: 42px; line-height: 50px; letter-spacing: -1px; margin-top: 31px; }
.failures { margin-top: 51px; }
.bar { height: 28px; border-radius: 12px; background: #02c24e; }
.summary { display: flex; flex-direction: column; align-items: flex-end; letter-spacing: -0.3px; }
.link { color: #0568e6; }
.button {
  width: 321px;
  height: 76px;
  border: 2px solid #efeff4;
  border-radius: 18px;
  background: #f4f5f9;
  display: flex;
  align-items: center;
  gap: 20px;
  padding-left: 32px;
  letter-spacing: -0.52px;
}
.table { margin-top: 51px; border: 2px solid #efeff4; border-radius: 26px; background: #f4f5f9; padding: 0 4px 4px; letter-spacing: -0.25px; }
.row { display: grid; grid-template-columns: 637px 212px 147px 165px 159px 165px 163px 165px 166px 1fr; align-items: center; padding-left: 35px; }
.head { height: 91px; padding-bottom: 2px; font-weight: 450; letter-spacing: -0.35px; }
.body { height: 96px; background: #fff; border-radius: 22px; }
.num { text-align: right; padding-right: 52px; }
.num.time { padding-right: 51px; }
footer { height: 128px; display: flex; justify-content: flex-end; gap: 90px; align-items: center; padding-right: 57px; letter-spacing: -0.15px; }
footer span:first-child { letter-spacing: -0.4px; }
```
